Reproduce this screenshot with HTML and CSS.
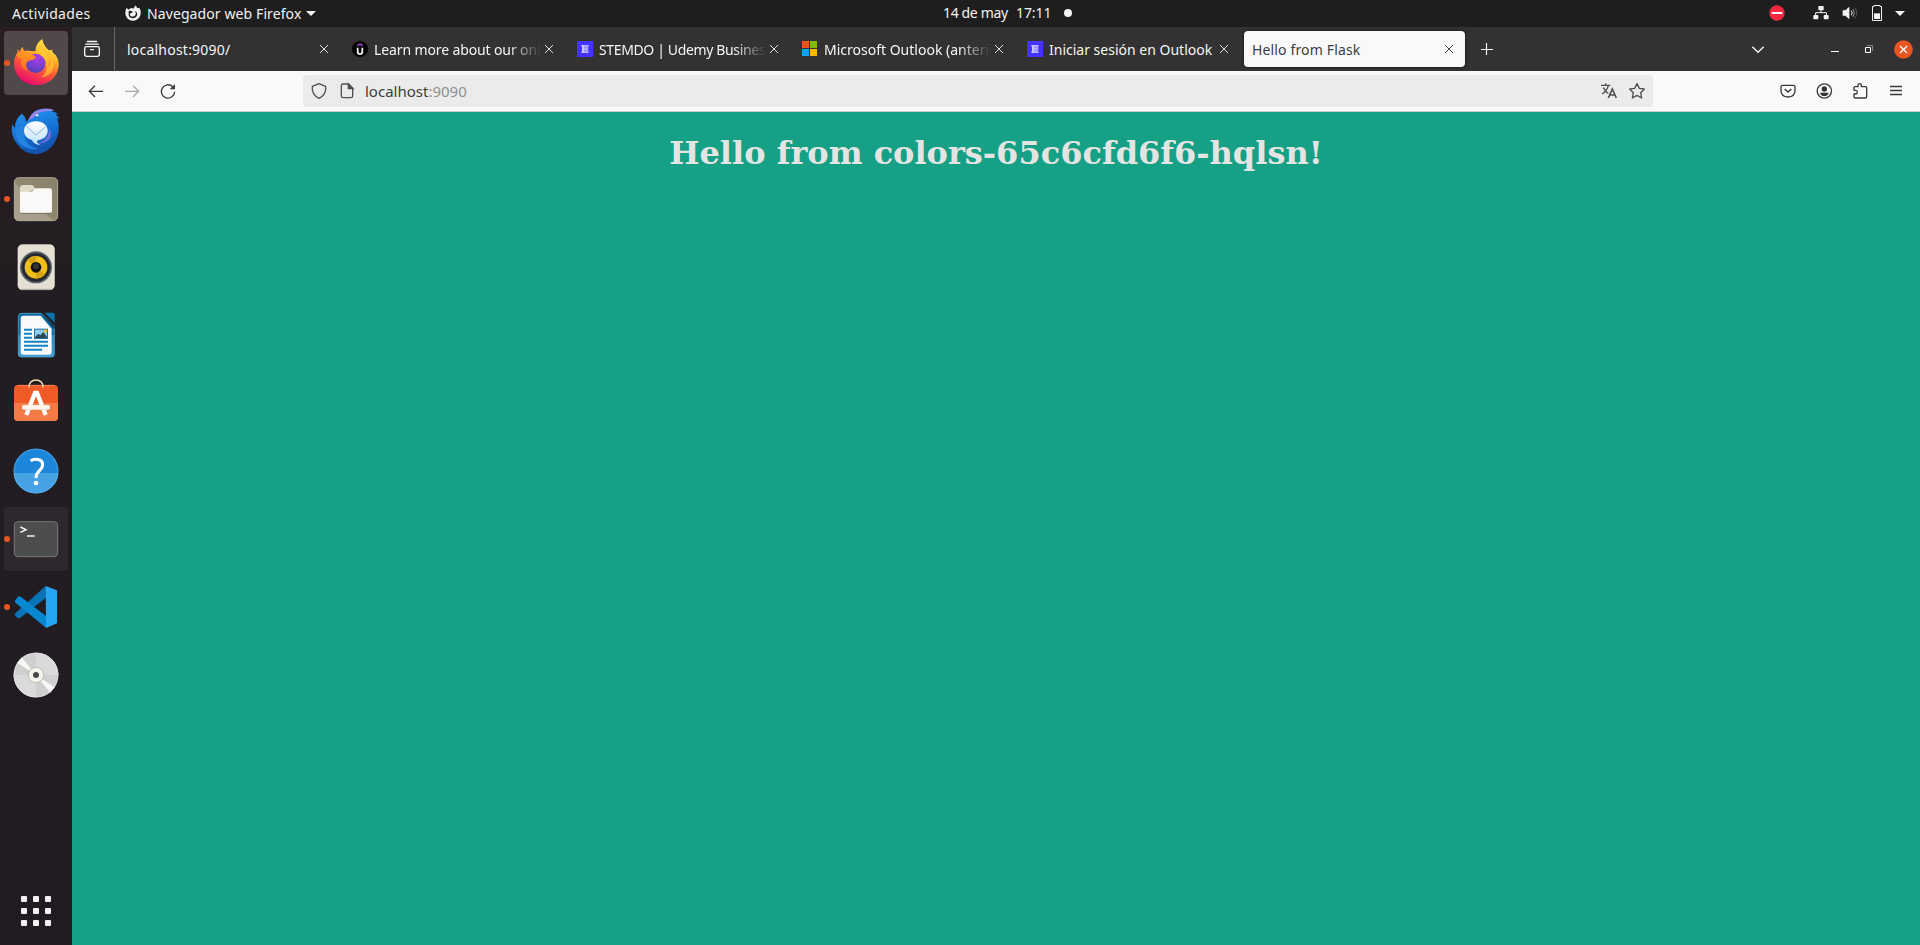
FILE: index.html
```
<!DOCTYPE html>
<html lang="es">
<head>
<meta charset="utf-8">
<title>Hello from Flask</title>
<link rel="stylesheet" href="styles.css">
</head>
<body>
<header class="topbar">
  <span class="activities">Actividades</span>
  <div class="appmenu">
    <svg class="i16" viewBox="0 0 48 48"><path fill="#f2f2f2" d="M1 24Q1 14 5 8l5 6q5-5 11-5l4 2 7-10 5 9 6-2q5 8 4 17c-1 15-12 22-23 22S1 39 1 24z"/><path fill="#1e1e1e" d="m11 17 8 1 5 3-5 3c-4 1-5 3-4 6 2 5 8 6 13 3 6-4 6-12 0-16 9 2 12 13 5 19-8 7-20 4-22-6z"/></svg>
    <span class="appname">Navegador web Firefox</span>
    <i class="caret"></i>
  </div>
  <div class="clock"><span class="date">14 de may</span><span class="time">17:11</span><i class="dot"></i></div>
  <div class="tray">
    <svg class="i16 dnd" viewBox="0 0 48 48"><circle cx="24" cy="24" r="23" fill="#f5283f"/><path fill="#fff" d="M8 21h32v6H8z"/></svg>
    <svg class="i16 net" viewBox="0 0 48 48"><g fill="#f2f2f2"><rect x="16" y="3" width="16" height="13" rx="2"/><rect x="1" y="30" width="15" height="13" rx="3"/><rect x="32" y="30" width="15" height="13" rx="3"/></g><path d="M24 15v8M8 31v-8h32v8" fill="none" stroke="#f2f2f2" stroke-width="3"/></svg>
    <svg class="i16 vol" viewBox="0 0 48 48"><path fill="#f2f2f2" d="M2 16h8L22 5v38L10 32H2z"/><path d="M28 17q5 7 0 14" fill="none" stroke="#eee" stroke-width="3"/><path d="M33 12q8 12 0 24" fill="none" stroke="#999" stroke-width="3"/><path d="M39 8q10 16 0 32" fill="none" stroke="#555" stroke-width="3"/></svg>
    <svg class="i16 bat" viewBox="0 0 48 48"><path d="M15 4.500V1.500h18v3h4.500v42h-27v-42z" fill="none" stroke="#f2f2f2" stroke-width="3" stroke-linejoin="round"/><path fill="#f2f2f2" d="M15 25h18v17H15z"/></svg>
    <i class="caret"></i>
  </div>
</header>
<div class="desktop">
  <nav class="dock">
    <div class="item focused"><i class="run"></i>
      <svg viewBox="12 33 192 192"><defs><linearGradient id="fx" x1=".8" y1="0" x2=".35" y2="1"><stop offset="0" stop-color="#fff44f"/><stop offset=".35" stop-color="#ffb52a"/><stop offset=".62" stop-color="#ff5a36"/><stop offset="1" stop-color="#e60870"/></linearGradient><radialGradient id="fg" cx=".6" cy=".2" r=".85"><stop offset="0" stop-color="#b33be8"/><stop offset=".6" stop-color="#7540d0"/><stop offset="1" stop-color="#4b3fae"/></radialGradient><linearGradient id="fo" x1="0" y1="0" x2="0" y2="1"><stop offset="0" stop-color="#ff9a20"/><stop offset="1" stop-color="#ff6b2c"/></linearGradient></defs>
      <path fill="url(#fx)" d="M42 132q0-22 10-34l1-10 7 7q2-10 8-15 1 9 5 13 6-2 12-1l21 2q1-25 21-37 1 14 10 24l9 10 11-2q-1 5 1 8 18 14 18 37c-2 39-32 61-67 61s-65-24-67-63z"/>
      <circle cx="107" cy="130" r="29" fill="url(#fg)"/><path fill="url(#fo)" d="M50 101q12-6 23-5 6 7 18 8 11 0 17 7-3 9-18 10-10 3-11 10-3 13 6 22-21-5-23-27l3-9q-8-2-15-10z"/><path fill="#ffd52f" d="M106 94q14-7 22-2l7 8q17 14 9 40 12-7 10-24 13 21-1 43-15 14-30 12 18-11 17-34 0-22-20-31 8-1 7-5-8-1-21-7z" opacity=".6"/></svg></div>
    <div class="item">
      <svg viewBox="12 237 192 192"><defs><linearGradient id="tb" x1="0" y1="0" x2=".3" y2="1"><stop offset="0" stop-color="#249bf5"/><stop offset=".55" stop-color="#1674d7"/><stop offset="1" stop-color="#1153ad"/></linearGradient><linearGradient id="tm" x1="0" y1="0" x2="0" y2="1"><stop offset="0" stop-color="#fff"/><stop offset="1" stop-color="#b9e0fc"/></linearGradient></defs>
      <path fill="url(#tb)" d="M37 312q3 9 8 11-1-24 20-42 14 9 12 25l10-8q7-26 36-31 25-4 41 5-6-1-10 1l22 8-9 1 12 14-7-1q13 42-11 78-21 28-52 30-37-1-57-30-22-27-15-61z"/><path d="M85 301q9-26 34-32 23-6 44 1l-13 3q-34-2-50 20z" fill="#9b81e8"/><path d="M149 326q-3 31-30 42l-12 3q31 0 42-15 8-13 0-30" fill="#6f70e0"/><path d="M47 323q-5 41 27 57 20 10 40 7-35-8-41-37-3-17 3-31z" fill="#2384e0"/><path fill="url(#tm)" d="M108 304c20 0 35 12 35 28s-12 26-27 28q-7 2-4 8l9 8q-20-3-25-16c-14-4-24-14-24-28 0-16 16-28 36-28z"/><path d="m77 317 31 28 32-27" fill="none" stroke="#78a9d8" stroke-width="2.500"/><ellipse cx="111" cy="286" rx="5" ry="3" fill="#e8f5ff"/></svg></div>
    <div class="item"><i class="run"></i>
      <svg viewBox="12 441 192 192"><defs><linearGradient id="fi" x1="1" y1="0" x2="0" y2="1"><stop offset="0" stop-color="#888069"/><stop offset=".55" stop-color="#91896f"/><stop offset=".56" stop-color="#a59d89"/><stop offset="1" stop-color="#aaa28e"/></linearGradient></defs><rect x="43" y="473" width="130" height="129" rx="13" fill="url(#fi)" stroke="#beb6a2" stroke-width="2.500"/><path d="M60 505q0-10 9-10h25q5 0 8 5l5 7-47 21z" fill="#dfdac9"/><path d="M60 521q0-6 7-6h25q6 0 9-5 3-5 9-5h39q7 0 7 7v60q0 7-7 7H67q-7 0-7-7z" fill="#faf9f7"/><path d="M64 580h88" stroke="#777060" stroke-width="3"/></svg></div>
    <div class="item">
      <svg viewBox="12 15 192 192"><rect x="54" y="44" width="109" height="135" rx="13" fill="#e5e0d3" stroke="#f1ede4" stroke-width="2"/><path d="M64 178h90" stroke="#aaa69c" stroke-width="3"/><circle cx="108" cy="112" r="48" fill="#5b6069"/><circle cx="108" cy="112" r="43" fill="#24282f"/><circle cx="108" cy="112" r="34" fill="#f1be1b"/><path d="M108 112 82 90q11-13 26-12M108 112l27 21q-11 13-27 13" fill="#d6a411"/><circle cx="108" cy="112" r="16" fill="#101010"/><circle cx="108" cy="109" r="9" fill="#333"/></svg></div>
    <div class="item">
      <svg viewBox="12 219 192 192"><defs><linearGradient id="lw" x1="0" y1="0" x2="0" y2="1"><stop offset=".5" stop-color="#086aa5"/><stop offset=".5" stop-color="#2287c2"/><stop offset="1" stop-color="#3c9cd0"/></linearGradient></defs><path d="M64 250h60l39 36v86q0 9-9 9H64q-9 0-9-9V259q0-9 9-9z" fill="url(#lw)" stroke="#5eb6e0" stroke-width="2"/><path d="M70 257h52l33 39v70q0 8-8 8H70q-8 0-8-8V265q0-8 8-8z" fill="#fafafa"/><path d="M134 248h25q5 0 5 5v25z" fill="#0871aa"/><path d="m125 252 39 32v14z" fill="#12384c"/><path d="M72 299.500h24M72 311.500h24M72 323.500h24M72 335.500h72M72 347.500h72M72 359.500h54" stroke="#1285c5" stroke-width="6"/><path d="M102 296h42v31h-42z" fill="#1274a9"/><path d="M105 299h36v25h-36z" fill="#8ccdf0"/><path d="m105 322 10-11 6 5 9-10 11 15v3h-36z" fill="#31464e"/><circle cx="137" cy="303" r="5" fill="#f8bd22"/></svg></div>
    <div class="item">
      <svg viewBox="12 423 192 192"><rect x="42" y="465" width="132" height="108" rx="12" fill="#ef5a26"/><path d="M42 519h132v42q0 12-12 12H54q-12 0-12-12z" fill="#f47a46"/><path d="M54 466h108" stroke="#ff976a" stroke-width="2"/><path d="M87 473c-3-31 45-31 42 0" fill="none" stroke="#eed8ae" stroke-width="4.500"/><path d="m79 555 26-66h6l26 66" fill="none" stroke="#fff" stroke-width="13"/><rect x="66" y="525" width="84" height="14" rx="6" fill="#fff3eb" stroke="#d5c8bf" stroke-width="1"/></svg></div>
    <div class="item">
      <svg viewBox="12 27 192 192"><circle cx="108" cy="123" r="67" fill="#1c86d9"/><path d="M41 129h134a67 61 0 0 1-134 0" fill="#46a2e3"/><circle cx="108" cy="123" r="66" fill="none" stroke="#62b7ed" stroke-width="2"/><path d="M92 93c10-8 35-7 36 10 1 18-21 19-20 41" fill="none" stroke="#fff" stroke-width="9"/><circle cx="108" cy="159" r="7" fill="#fff"/></svg></div>
    <div class="item open"><i class="run"></i>
      <svg viewBox="12 231 192 192"><rect x="43" y="275" width="130" height="105" rx="11" fill="#4d4d4d" stroke="#777" stroke-width="3"/><path d="m61 291 17 8-17 8M81 318h23" fill="none" stroke="#f5f5f5" stroke-width="4.500"/></svg></div>
    <div class="item"><i class="run"></i>
      <svg viewBox="12 15 192 192"><path d="m46 130 91-82 1 35-77 60q-5 3-9 0l-7-7q-3-3 1-6z" fill="#0873b7"/><path d="m46 91 7-9q4-5 9-2l77 59v35L46 98q-3-3 0-7z" fill="#0788d1"/><path d="m137 48 34 13v99l-33 14z" fill="#25a5f2"/></svg></div>
    <div class="item">
      <svg viewBox="12 219 192 192"><circle cx="108" cy="315" r="67" fill="#cfcfcf"/><path d="M108 315 108 248a67 67 0 0 1 67 67zM108 315v67a67 67 0 0 1-67-67z" fill="#dadada"/><path d="M108 315 52 278l13-16zM108 315l56 37-13 16z" fill="#f8f8f6"/><circle cx="108" cy="315" r="66" fill="none" stroke="#e8e8e8" stroke-width="2"/><circle cx="108" cy="315" r="23" fill="#f4f3ee" stroke="#aaa28c" stroke-width="2"/><circle cx="108" cy="315" r="9" fill="#484848"/></svg></div>
    <div class="apps"><i></i><i></i><i></i><i></i><i></i><i></i><i></i><i></i><i></i></div>
  </nav>
  <main class="browser">
    <div class="tabstrip">
      <div class="view"><svg class="i16" viewBox="0 0 48 48" fill="none" stroke="#f5f5f5" stroke-width="4" stroke-linecap="round"><path d="M10 1.500h28M5 9.500h38"/><rect x="2" y="17" width="44" height="29" rx="6"/><path d="M20 26h8"/></svg></div>
      <div class="tab"><span class="label t1">localhost:9090/</span><svg class="x" viewBox="0 0 24 24"><path d="m0 0 24 24M24 0 0 24"/></svg></div>
      <div class="tab"><svg class="i16 fav" viewBox="0 0 48 48"><circle cx="24" cy="24" r="24" fill="#050505"/><path d="m16 14 8-5 8 5" fill="none" stroke="#b845ed" stroke-width="4"/><path d="M17 20v13q0 6 7 6t7-6V20" fill="none" stroke="#fff" stroke-width="5"/></svg><span class="label fade t2">Learn more about our onl</span><svg class="x" viewBox="0 0 24 24"><path d="m0 0 24 24M24 0 0 24"/></svg></div>
      <div class="tab"><svg class="i16 fav" viewBox="0 0 48 48"><path fill="#4433ff" d="M0 0h48v48H0z"/><path fill="#9a8fff" d="M15 12h19v24H15z"/><path d="M12 14.500h23M17 24h15M12 33.500h23" stroke="#c9c3ff" stroke-width="3"/><path d="M18 13v22" stroke="#d9d5ff" stroke-width="4"/></svg><span class="label fade t3">STEMDO | Udemy Busines</span><svg class="x" viewBox="0 0 24 24"><path d="m0 0 24 24M24 0 0 24"/></svg></div>
      <div class="tab"><svg class="i16 fav" viewBox="0 0 48 48"><path fill="#f4511d" d="M0 0h21v21H0z"/><path fill="#7fba00" d="M24 0h21v21H24z"/><path fill="#05a6f0" d="M0 24h21v21H0z"/><path fill="#ffb900" d="M24 24h21v21H24z"/></svg><span class="label fade">Microsoft Outlook (anteri</span><svg class="x" viewBox="0 0 24 24"><path d="m0 0 24 24M24 0 0 24"/></svg></div>
      <div class="tab"><svg class="i16 fav" viewBox="0 0 48 48"><path fill="#4433ff" d="M0 0h48v48H0z"/><path fill="#9a8fff" d="M15 12h19v24H15z"/><path d="M12 14.500h23M17 24h15M12 33.500h23" stroke="#c9c3ff" stroke-width="3"/><path d="M18 13v22" stroke="#d9d5ff" stroke-width="4"/></svg><span class="label">Iniciar sesión en Outlook</span><svg class="x" viewBox="0 0 24 24"><path d="m0 0 24 24M24 0 0 24"/></svg></div>
      <div class="tab active"><span class="label t6">Hello from Flask</span><svg class="x" viewBox="0 0 24 24"><path d="m0 0 24 24M24 0 0 24"/></svg></div>
      <svg class="new" viewBox="0 0 36 36"><path d="M16.500 0v36M0 19.500h36" stroke="#f5f5f5" stroke-width="3.500"/></svg>
      <div class="winctl">
        <svg class="all" viewBox="0 0 36 21"><path d="m1 2 17 17L35 2" fill="none" stroke="#f5f5f5" stroke-width="4"/></svg>
        <i class="min"></i>
        <svg class="restore" viewBox="0 0 24 24"><path d="M6 1.500h16.500V18" fill="none" stroke="#858384" stroke-width="3"/><path d="M1.500 7.500h15v15h-15z" fill="none" stroke="#fff" stroke-width="3"/></svg>
        <svg class="close" viewBox="0 0 57 57"><circle cx="28.500" cy="28.500" r="28" fill="#e95420"/><path d="m18 18 21 21M39 18 18 39" stroke="#fff" stroke-width="4"/></svg>
      </div>
    </div>
    <div class="toolbar">
      <svg class="i16 back" viewBox="0 0 48 48"><path d="M45 25H5M21 8 4 25l17 17"/></svg>
      <svg class="i16 fwd" viewBox="0 0 48 48"><path d="M3 25h40M27 8l17 17-17 17"/></svg>
      <svg class="i16 reload" viewBox="0 0 48 48"><path d="M38 11A20 20 0 1 0 44 26"/><path d="M45 3v16H29z" fill="#3a3a3a" stroke="none"/></svg>
      <div class="urlbar">
        <svg class="i16 shield" viewBox="0 0 48 48"><path d="M24 2 44 10C46 27 38 39 24 46 10 39 2 27 4 10z" stroke-linejoin="round"/></svg>
        <svg class="i16 page" viewBox="0 0 48 48"><path d="M12 3h17l12 13v23q0 5-5 5H12q-5 0-5-5V8q0-5 5-5z"/><path d="M28 3v14h14z" fill="#555"/></svg>
        <span class="url">localhost<em>:9090</em></span>
        <svg class="i16 trans" viewBox="0 0 48 48"><path d="M0 7h28M14 1v6M22 8Q18 24 3 33M7 14q6 12 15 17"/><path d="m22 45 12-27 12 27M26 36h16" stroke-width="5"/></svg>
        <svg class="i16 star" viewBox="0 0 48 48"><path d="m24 2 7 14 15 2-11 11 3 16-14-8-14 8 3-16L2 18l15-2z" stroke-linejoin="round"/></svg>
      </div>
      <div class="tools">
        <svg class="i16" viewBox="0 0 48 48"><path d="M8 7h32q5 0 5 5v10c0 13-8 20-21 20S3 35 3 22V12q0-5 5-5z"/><path d="m14 18 10 9 10-9" stroke-width="4.500"/></svg>
        <svg class="i16" viewBox="0 0 48 48"><circle cx="25" cy="24" r="21.500"/><circle cx="25" cy="18" r="8" fill="#333" stroke="none"/><path d="M12 29h26q-3 10-13 10T12 29z" fill="#333" stroke="none"/></svg>
        <svg class="i16" viewBox="0 0 48 48"><path d="M6 22v-8q0-3 3-3h9V7q0-5 5-5t5 5v4h13q3 0 3 3v27q0 4-4 4H10q-4 0-4-4v-8h5q5 0 5-5.500T11 22z" stroke-linejoin="round"/></svg>
        <svg class="i16" viewBox="0 0 48 48"><path d="M6 10.500h36M6 22.500h36M6 34.500h36"/></svg>
      </div>
    </div>
    <section class="content"><h1>Hello from colors-65c6cfd6f6-hqlsn!</h1></section>
  </main>
</div>
</body>
</html>
```
FILE: styles.css
```
* { box-sizing: border-box; }
html, body { height: 100%; }
body { margin: 0; display: flex; flex-direction: column; overflow: hidden; background: #231d22; font: 14px/20px "Noto Sans", "Open Sans", sans-serif; }
svg { display: block; flex: none; overflow: visible; }
i { display: block; flex: none; font-style: normal; }
span { white-space: nowrap; }
.i16 { width: 16px; height: 16px; }

.topbar { flex: none; height: 27px; display: flex; align-items: center; background: #1e1e1e; color: #f2f2f2; padding-bottom: 1px; }
.activities { width: 113px; margin-left: 12px; letter-spacing: .35px; padding-top: 1px; }
.appmenu { display: flex; align-items: center; width: 818px; }
.appname { margin-left: 6px; width: 155px; letter-spacing: .1px; padding-top: 1px; }
.caret { border: 5px solid transparent; border-top-color: #f2f2f2; border-bottom: 0; margin-left: 4px; }
.clock { display: flex; align-items: center; }
.date { width: 66px; letter-spacing: -.35px; }
.time { width: 34px; margin-left: 7px; letter-spacing: -.1px; }
.dot { width: 8px; height: 8px; border-radius: 50%; background: #f2f2f2; margin-left: 14px; }
.tray { margin-left: auto; margin-right: 15px; display: flex; align-items: center; }
.dnd { margin-right: 28px; }
.net { margin-right: 13px; }
.vol { margin-right: 11px; }
.bat { margin-right: 6px; }

.desktop { flex: 1; min-height: 0; display: flex; }
.dock { flex: none; width: 72px; padding: 4px 4px 19px; display: flex; flex-direction: column; gap: 4px; background: linear-gradient(#291d20, #221d22 30%, #211c21); }
.item { flex: none; height: 64px; border-radius: 4px; position: relative; }
.item svg { width: 64px; height: 64px; }
.focused { background: #514849; }
.open { background: #2e282e; }
.run { position: absolute; left: 0; top: 29px; width: 6px; height: 6px; border-radius: 50%; background: #e95420; }
.apps { margin: auto auto 0; display: grid; grid-template-columns: repeat(3, 6px); gap: 6px; }
.apps i { height: 6px; border-radius: 1px; background: #f2f1ef; }

.browser { flex: 1; min-width: 0; display: flex; flex-direction: column; }
.tabstrip { flex: none; height: 44px; display: flex; align-items: center; background: #333132; color: #f5f5f5; }
.view { width: 43px; height: 44px; border-right: 1px solid #696768; margin-right: 4px; padding: 14px 0 0 12px; }
.tab { flex: none; width: 221px; height: 36px; margin-right: 4px; padding: 0 12px 0 8px; display: flex; align-items: center; border-radius: 4px; }
.fav { margin-right: 6px; }
.label { flex: 1; min-width: 0; margin-right: 4px; padding-top: 1px; }
.fade { -webkit-mask-image: linear-gradient(to left, transparent, #000 32px); mask-image: linear-gradient(to left, transparent, #000 32px); }
.t1 { letter-spacing: .22px; }
.t2 { letter-spacing: -.12px; }
.t3 { letter-spacing: -.36px; }
.t6 { letter-spacing: .15px; }
.x { width: 8px; height: 8px; stroke: #e0e0e0; stroke-width: 3; }
.active { background: #f9f9f9; color: #3d3d3d; box-shadow: 0 0 3px #111; }
.active .x { stroke: #444; }
.new { width: 12px; height: 12px; margin-left: 12px; }
.winctl { margin-left: auto; margin-right: 7px; display: flex; align-items: center; }
.all { width: 12px; height: 7px; margin-right: 67px; }
.min { width: 8px; height: 1px; background: #fff; margin: 5px 26px 0 0; }
.restore { width: 8px; height: 8px; margin-right: 21px; }
.close { width: 19px; height: 19px; }

.toolbar { flex: none; height: 41px; display: flex; align-items: center; background: #f9f9f9; border-bottom: 1px solid #ccc; padding-left: 16px; }
.toolbar svg { fill: none; stroke: #3a3a3a; stroke-width: 4; }
.toolbar .fwd { stroke: #aaa; }
.back, .fwd { margin-right: 20px; }
.reload { margin-right: 127px; }
.urlbar { width: 1350px; height: 32px; background: #ebebeb; border-radius: 4px; display: flex; align-items: center; padding: 0 8px; }
.shield { margin-right: 12px; }
.page { margin-right: 10px; }
.url { color: #3d3d3d; flex: 1; font-size: 15px; }
.url em { font-style: normal; color: #909090; }
.trans { margin-right: 12px; }
.toolbar .urlbar svg { stroke: #505050; }
.tools { margin-left: auto; margin-right: 16px; display: flex; gap: 20px; }

.content { flex: 1; background: #16a085; }
h1 { margin: 22px 0 0; text-align: center; color: #e4e5e3; font: bold 32px/38px "DejaVu Serif", serif; }
```
